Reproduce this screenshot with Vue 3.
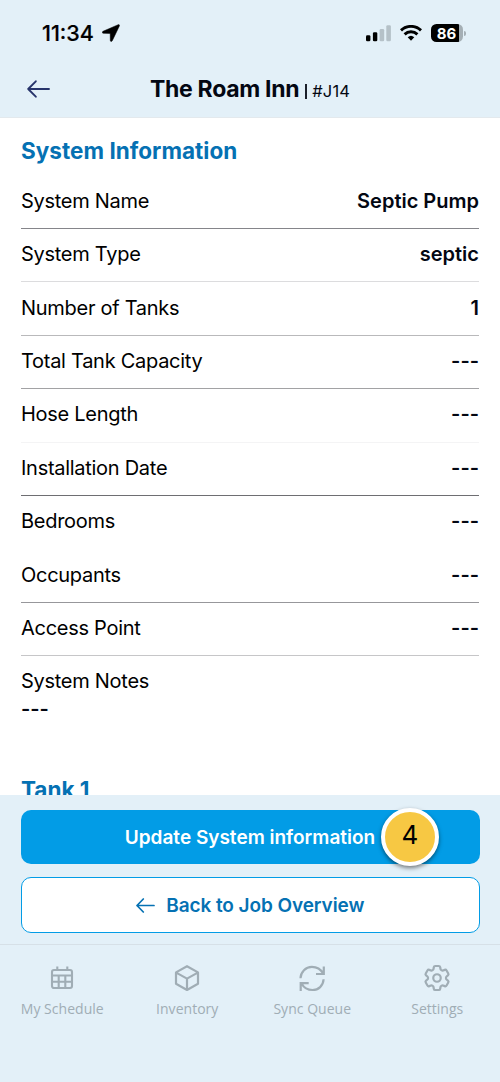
<script setup>
const rows = [
  { label: 'System Name', value: 'Septic Pump', line: '#85858a' },
  { label: 'System Type', value: 'septic', line: '#dcdcde' },
  { label: 'Number of Tanks', value: '1', line: '#b9b9bb' },
  { label: 'Total Tank Capacity', value: '---', line: '#a2a2a4' },
  { label: 'Hose Length', value: '---', line: '#f4f4f5' },
  { label: 'Installation Date', value: '---', line: '#6e6e72' },
  { label: 'Bedrooms', value: '---', line: 'transparent' },
  { label: 'Occupants', value: '---', line: '#97979b' },
  { label: 'Access Point', value: '---', line: '#c6c6c8' },
]
</script>

<template>
  <div class="screen">
    <header class="top">
      <div class="status">
        <span class="time">11:34</span>
        <svg class="loc" width="18" height="18" viewBox="0 0 18 18"><path d="M16.2.7 1 7.300c-1.100.5-.8 2 .3 2l6.900.1.1 7c0 1.200 1.500 1.400 2 .3L17.400 1.900c.3-.9-.3-1.500-1.200-1.200Z" fill="#000" stroke="#000" stroke-width=".5" /></svg>
        <span class="grow"></span>
        <svg class="signal" width="26" height="17" viewBox="0 0 26 17">
          <rect x="0" y="10.300" width="4.400" height="6" rx="1.300" fill="#000" />
          <rect x="6.900" y="7.300" width="4.400" height="9" rx="1.300" fill="#000" />
          <rect x="13.600" y="4" width="4.600" height="12.300" rx="1.300" fill="#b5c1c8" />
          <rect x="20.300" y=".3" width="4.600" height="16" rx="1.300" fill="#b5c1c8" />
        </svg>
        <svg class="wifi" width="22" height="16" viewBox="0 0 22 16" fill="none" stroke="#000" stroke-width="2.900">
          <path d="M1 5.400a14.400 14.400 0 0 1 20 0" />
          <path d="M4.600 9.400a9.200 9.200 0 0 1 12.800 0" />
          <path d="M7.700 12.300a4.900 4.900 0 0 1 6.600 0L11 15.700Z" fill="#000" stroke="none" />
        </svg>
        <div class="battery"><span>86</span></div>
        <i class="nub"></i>
      </div>
      <div class="title">
        <svg class="back" width="24" height="18" viewBox="0 0 24 18" fill="none" stroke="#27346b" stroke-width="1.900" stroke-linecap="round" stroke-linejoin="round"><path d="M22 9H1.200M8.800 1.300 1.200 9 8.800 16.700" /></svg>
        <h1>The Roam Inn</h1><span class="bar"></span><span class="job">#J14</span>
      </div>
    </header>

    <main class="content">
      <h2 class="sys">System Information</h2>
      <div class="rows">
        <div v-for="r in rows" :key="r.label" class="row" :style="{ borderBottomColor: r.line }">
          <span class="label">{{ r.label }}</span><span class="value">{{ r.value }}</span>
        </div>
      </div>
      <div class="notes">
        <span class="label">System Notes</span>
        <span class="value">---</span>
      </div>
      <h2 class="tank">Tank 1</h2>
    </main>

    <section class="actions">
      <button class="primary"><span>Update System information</span><b class="badge">4</b></button>
      <button class="secondary">
        <svg width="19" height="15" viewBox="0 0 19 15" fill="none" stroke="#0571b3" stroke-width="1.700" stroke-linecap="round" stroke-linejoin="round"><path d="M18 7.500H1M7.300 1 1 7.500 7.300 14" /></svg>
        <span>Back to Job Overview</span>
      </button>
    </section>

    <nav class="tabs">
      <div class="tab">
        <svg width="28" height="28" viewBox="0 0 28 28" fill="none" stroke="#a0adb5" stroke-width="2.100"><rect x="4" y="6" width="20" height="18" rx="2" /><path d="M4 11.500H24M4 17.700H24M10.700 11.500V24M17.300 11.500V24M9.300 2.500V6M19.300 2.500V6" /></svg>
        <span>My Schedule</span>
      </div>
      <div class="tab">
        <svg width="28" height="28" viewBox="0 0 28 28" fill="none" stroke="#a0adb5" stroke-width="2.200" stroke-linejoin="round"><path d="M14 2.200 25 8.400V19.800L14 26 3 19.800V8.400ZM3.200 8.600 14 14.600 24.800 8.600M14 14.600V25.500" /></svg>
        <span>Inventory</span>
      </div>
      <div class="tab">
        <svg width="28" height="28" viewBox="0 0 28 28" fill="none" stroke="#a0adb5" stroke-width="2.200"><path d="M2.500 14.300C2.700 7.800 7.700 2.900 13.900 2.900c4.800 0 8.800 2.300 11.300 6.600M25.800 2.500V10H18M25.600 15.300C25.200 21.800 20.500 26 14.500 26c-4.800 0-8.700-2.300-11-6.500M2.700 27V19.200H10.700" /></svg>
        <span>Sync Queue</span>
      </div>
      <div class="tab">
        <svg class="gear" width="32" height="32" viewBox="0 0 24 24" fill="none" stroke="#a0adb5" stroke-width="1.650" stroke-linejoin="round"><path d="M9.594 3.94c.09-.542.56-.94 1.11-.94h2.593c.55 0 1.02.398 1.11.94l.213 1.281c.063.374.313.686.645.87.074.04.147.083.22.127.325.196.72.257 1.075.124l1.217-.456a1.125 1.125 0 0 1 1.37.49l1.296 2.247a1.125 1.125 0 0 1-.26 1.431l-1.003.827c-.293.241-.438.613-.43.992a7.723 7.723 0 0 1 0 .255c-.008.378.137.75.43.991l1.004.827c.424.35.534.955.26 1.43l-1.298 2.247a1.125 1.125 0 0 1-1.369.491l-1.217-.456c-.355-.133-.75-.072-1.076.124a6.47 6.47 0 0 1-.22.128c-.331.183-.581.495-.644.869l-.213 1.281c-.09.543-.56.94-1.11.94h-2.594c-.55 0-1.019-.398-1.11-.94l-.213-1.281c-.062-.374-.312-.686-.644-.87a6.52 6.52 0 0 1-.22-.127c-.325-.196-.72-.257-1.076-.124l-1.217.456a1.125 1.125 0 0 1-1.369-.49l-1.297-2.247a1.125 1.125 0 0 1 .26-1.431l1.004-.827c.292-.24.437-.613.43-.991a6.932 6.932 0 0 1 0-.255c.007-.38-.138-.751-.43-.992l-1.004-.827a1.125 1.125 0 0 1-.26-1.43l1.297-2.247a1.125 1.125 0 0 1 1.37-.491l1.216.456c.356.133.751.072 1.076-.124.072-.044.146-.086.22-.128.332-.183.582-.495.644-.869l.214-1.280Z" /><circle cx="12" cy="12" r="2.800" /></svg>
        <span>Settings</span>
      </div>
    </nav>
  </div>
</template>

<style>
body { margin: 0; }
</style>

<style scoped>
.screen { width: 500px; height: 1082px; display: flex; flex-direction: column; overflow: hidden; background: #fff; font-family: Inter, "Liberation Sans", sans-serif; color: #030712; }
.screen span, h1, h2 { white-space: nowrap; }
h1, h2 { margin: 0; }
.top { box-sizing: border-box; height: 118px; flex: none; background: #e3f0f8; border-bottom: 1px solid #e3e9ed; }
.status { height: 66px; display: flex; align-items: center; padding: 0 34.500px 0 42px; }
.time { color: #000; font-size: 21.5px; font-weight: 500; letter-spacing: 0; -webkit-text-stroke: .2px #000; }
.loc { margin-left: 8px; }
.grow { flex: 1; }
.signal { margin-right: 8px; }
.wifi { margin-right: 9px; }
.battery { width: 32px; height: 18px; border-radius: 5.500px; display: flex; align-items: center; justify-content: center; color: #fff; background: linear-gradient(90deg, #000 28px, #a5afb5 28px); font-size: 15px; font-weight: 700; }
.nub { width: 2px; height: 5px; margin-left: 1px; border-radius: 0 2px 2px 0; background: #a5afb5; }
.title { height: 46px; display: flex; align-items: baseline; padding-left: 27px; }
.back { align-self: flex-start; margin: 13.500px 99px 0 0; }
h1 { font-size: 23px; line-height: 46px; font-weight: 700; letter-spacing: -.3px; }
.bar { width: 1.500px; height: 15px; margin-left: 6px; align-self: flex-start; margin-top: 17.500px; background: #1b202b; }
.job { margin-left: 5.500px; font-size: 16.500px; letter-spacing: .15px; }
.content { flex: none; box-sizing: border-box; height: 677px; padding: 0 21px; overflow: hidden; display: flex; flex-direction: column; }
.content > * { flex: none; }
h2 { color: #0571b3; font-weight: 700; font-size: 22.500px; line-height: 30px; }
.sys { margin-top: 18px; height: 39.600px; line-height: 30px; letter-spacing: .03px; }
.rows { display: grid; grid-auto-rows: 53.400px; }
.row { box-sizing: border-box; border-bottom: 1px solid; padding-bottom: 2px; display: flex; justify-content: space-between; align-items: center; }
.label { font-size: 20px; line-height: 28px; color: #000; letter-spacing: -.28px; }
.value { font-size: 20px; line-height: 28px; font-weight: 600; }
.notes { display: flex; flex-direction: column; padding-top: 11px; }
.tank { margin-top: 52px; }
.actions { flex: none; box-sizing: border-box; height: 150px; background: #e3f0f8; border-bottom: 1px solid #d6e0e7; padding: 15px 20.500px 0; display: flex; flex-direction: column; gap: 13px; }
button { font: inherit; font-size: 19px; font-weight: 600; padding: 0; display: flex; align-items: center; justify-content: center; border-radius: 10px; box-sizing: border-box; }
.primary { position: relative; height: 54px; border: 0; background: #029ce6; color: #fff; }
.secondary { height: 56px; border: 1px solid #029ce6; background: #fff; color: #0571b3; gap: 11.500px; letter-spacing: -.08px; }
.badge { position: absolute; left: 360.500px; top: -2px; box-sizing: border-box; width: 58px; height: 58px; border: 4px solid #fff; border-radius: 50%; background: #f7c843; box-shadow: 0 2px 4px rgb(0 0 0 / 50%); color: #000; font-size: 26px; font-weight: 400; line-height: 46px; text-align: center; }
.tabs { flex: 1; background: #e3f0f8; display: grid; grid-template-columns: repeat(4, 125px); padding-top: 19px; align-items: start; }
.tab { display: flex; flex-direction: column; align-items: center; margin-left: -.5px; color: #a0adb5; font-family: "Open Sans", sans-serif; font-size: 14px; line-height: 20px; }
.gear { margin: -2px 0; }
.tab span { margin-top: 7px; letter-spacing: .03px; }
</style>
